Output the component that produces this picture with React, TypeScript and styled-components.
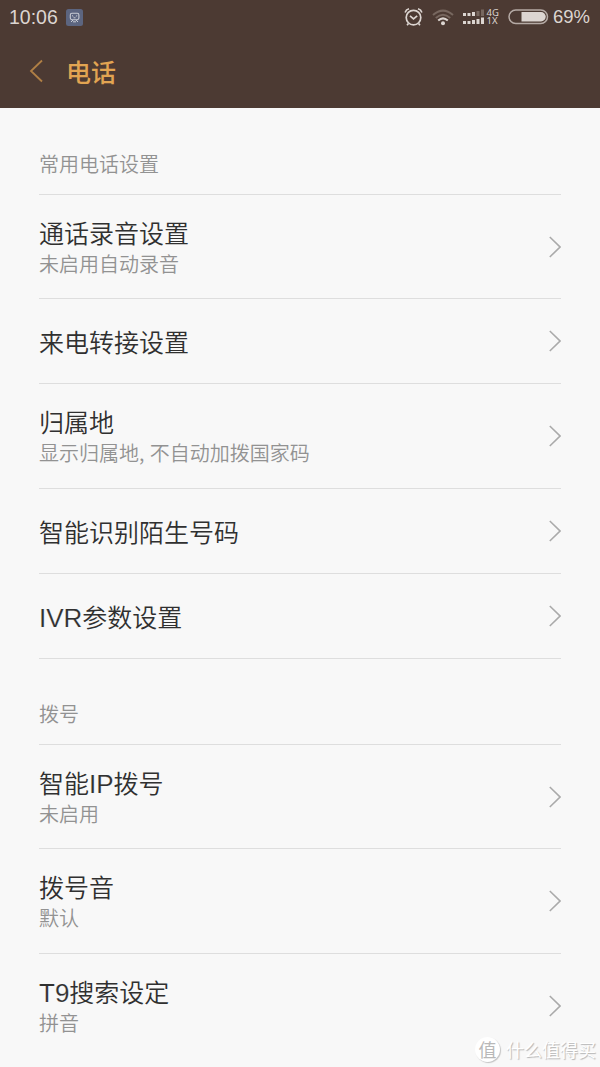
import React from "react";
import styled, { createGlobalStyle } from "styled-components";

const Global = createGlobalStyle`
  body { margin: 0; background: #f8f8f8; }
  * { box-sizing: border-box; }
`;

const Screen = styled.div`
  position: relative;
  width: 600px;
  height: 1067px;
  overflow: hidden;
  background: #f8f8f8;
  font-family: "Liberation Sans", "Noto Sans CJK SC", sans-serif;
`;

const Header = styled.header`
  height: 108px;
  background: #4c3a33;
`;

const StatusBar = styled.div`
  height: 34px;
  padding: 0 10px 0 9px;
  display: flex;
  align-items: center;
  color: #dcd5d1;
`;

const Clock = styled.span`
  width: 57px;
  font-size: 19.5px;
  line-height: 34px;
  white-space: nowrap;
`;

const StatusIcons = styled.div`
  margin-left: auto;
  display: flex;
  align-items: center;
`;

const Battery = styled.span`
  width: 41px;
  font-size: 18.5px;
  line-height: 34px;
  text-align: right;
  white-space: nowrap;
`;

const TitleBar = styled.div`
  height: 74px;
  padding-left: 29px;
  display: flex;
  align-items: center;
`;

const PageTitle = styled.h1`
  margin: -1px 0 0 22px;
  font-family: "Noto Sans CJK SC", sans-serif;
  font-size: 25px;
  line-height: 74px;
  font-weight: 500;
  color: #e2a452;
`;

const List = styled.main`
  padding: 0 39px;
`;

const SectionTitle = styled.h2`
  margin: 0;
  height: 86px;
  padding-top: 41px;
  font-family: "Noto Sans CJK SC", sans-serif;
  font-size: 20px;
  line-height: 30px;
  font-weight: 350;
  color: #929292;
`;

const Row = styled.div<{ $height: number }>`
  height: ${(p) => p.$height}px;
  border-top: 1px solid #dedede;
  display: flex;
  align-items: center;
  justify-content: space-between;
`;

const RowText = styled.div<{ $single: boolean }>`
  padding: ${(p) => (p.$single ? "0 0 1px" : "2px 0 0")};
  font-family: "Noto Sans CJK SC", sans-serif;
  font-weight: 350;
  white-space: nowrap;
`;

const RowTitle = styled.div`
  font-size: 25px;
  line-height: 30px;
  color: #303030;
`;

const Latin = styled.span`
  font-family: "Liberation Sans", sans-serif;
  font-size: 26px;
  line-height: 1;
  font-weight: 400;
  -webkit-text-stroke: 0.15px #f8f8f8;
`;

const RowNote = styled.div`
  margin-top: 2px;
  font-size: 20px;
  line-height: 30px;
  word-spacing: 1px;
  color: #929292;
`;

const Watermark = styled.div`
  position: absolute;
  left: 475px;
  top: 1035px;
  display: flex;
  align-items: center;
  gap: 6px;
  font-family: "Noto Sans CJK SC", sans-serif;
  font-size: 18px;
  line-height: 28px;
  color: #fff;
  text-shadow: 1px 1px 1px #b4b4b4;
  white-space: nowrap;
`;

const Badge = styled.span`
  width: 25px;
  height: 25px;
  border-radius: 50%;
  background: #fff;
  box-shadow: 1px 1px 1px #c4c4c4;
  color: #b8b8b8;
  font-size: 18px;
  line-height: 24px;
  text-align: center;
  text-shadow: none;
`;

const Chevron = () => (
  <svg width="12" height="22" viewBox="0 0 12 22" fill="none" stroke="#aaa" strokeWidth="1.6">
    <path d="M0.8 1L11 11L0.8 21" />
  </svg>
);

const AppIcon = () => (
  <svg width="17" height="17" viewBox="0 0 17 17" fill="none">
    <rect width="17" height="17" rx="2.5" fill="#5c6580" />
    <rect x="4.3" y="4.3" width="8.6" height="6.4" rx="1.6" stroke="#c8cbd3" strokeWidth="1.1" />
    <path d="M6 6.5l1.3.8M11.2 6.5l-1.3.8M7.5 8.8h2M7 11l-2 2M10 11l2 2M7 12.8h3" stroke="#c8cbd3" />
  </svg>
);

const AlarmIcon = () => (
  <svg width="19" height="20" viewBox="0 0 19 20" fill="none" stroke="#dcd5d1" strokeWidth="1.7">
    <circle cx="9.5" cy="10.6" r="7.3" />
    <path d="M6 8.8l3.5 3 3.7-3" />
    <path d="M1.1 5.4Q2 2.5 5 1.7M17.9 5.4Q17 2.5 14 1.7M4.4 16.5l-1.3 1.7M14.6 16.5l1.3 1.7" />
  </svg>
);

const WifiIcon = () => (
  <svg width="22" height="17" viewBox="0 0 22 17" fill="none" strokeWidth="2">
    <path d="M1 6Q11-2.8 21 6" stroke="#77675f" />
    <path d="M3.8 9Q11 2.4 18.2 9" stroke="#77675f" />
    <path d="M6.2 11.6Q11 7.2 15.8 11.6" stroke="#dcd5d1" />
    <circle cx="11" cy="14.2" r="2" fill="#dcd5d1" />
  </svg>
);

const SignalIcon = () => (
  <svg width="37" height="26" viewBox="0 -4 37 26" fill="#dcd5d1">
    <path d="M0 5h3v3H0zM4.5 5h3v3h-3zM9 4h3v4H9zM0 13h3v3H0zM4.5 13h3v3h-3zM9 12h3v4H9zM13.5 11h3v5h-3zM18 9.5h3v6.5h-3z" />
    <path d="M13.5 3h3v5h-3zM18 1.5h3v6.5h-3z" fill="#77675f" />
    <text x="23.5" y="7.5" fontSize="9.5" fontFamily="Noto Sans">4G</text>
    <text x="23.5" y="16" fontSize="9.5" fontFamily="Noto Sans">1X</text>
  </svg>
);

const BatteryIcon = () => (
  <svg width="41" height="16" viewBox="0 0 41 16" fill="none">
    <rect x="1" y="1" width="38.5" height="13.5" rx="6.75" stroke="#b5aaa5" strokeWidth="1.5" />
    <path d="M13.5 3H33a4.75 4.75 0 0 1 0 9.5H13.5z" fill="#dcd5d1" />
  </svg>
);

const BackIcon = () => (
  <svg width="15" height="24" viewBox="0 0 15 24" fill="none" stroke="#b07f45" strokeWidth="1.8">
    <path d="M13 1.5L2 12L13 22.5" />
  </svg>
);

const Cell = styled.span<{ $gap: number }>`
  display: flex;
  margin-right: ${(p) => p.$gap}px;
`;

type Item = { latin?: string; before?: string; text: string; note?: string; height: number };

const common: Item[] = [
  { text: "通话录音设置", note: "未启用自动录音", height: 104 },
  { text: "来电转接设置", height: 85 },
  { text: "归属地", note: "显示归属地, 不自动加拨国家码", height: 105 },
  { text: "智能识别陌生号码", height: 85 },
  { latin: "IVR", text: "参数设置", height: 85 },
];

const dialing: Item[] = [
  { before: "智能", latin: "IP", text: "拨号", note: "未启用", height: 104 },
  { text: "拨号音", note: "默认", height: 105 },
  { latin: "T9", text: "搜索设定", note: "拼音", height: 105 },
];

const Divider = styled.div`
  height: 0;
  margin-bottom: -1px;
  border-top: 1px solid #dedede;
`;

const SettingRow = ({ item }: { item: Item }) => (
  <Row $height={item.height}>
    <RowText $single={!item.note}>
      <RowTitle>
        {item.before}
        {item.latin && <Latin>{item.latin}</Latin>}
        {item.text}
      </RowTitle>
      {item.note && <RowNote>{item.note}</RowNote>}
    </RowText>
    <Chevron />
  </Row>
);

export default function App() {
  return (
    <Screen>
      <Global />
      <Header>
        <StatusBar>
          <Clock>10:06</Clock>
          <AppIcon />
          <StatusIcons>
            <Cell $gap={9}><AlarmIcon /></Cell>
            <Cell $gap={9}><WifiIcon /></Cell>
            <Cell $gap={8}><SignalIcon /></Cell>
            <BatteryIcon />
            <Battery>69%</Battery>
          </StatusIcons>
        </StatusBar>
        <TitleBar>
          <BackIcon />
          <PageTitle>电话</PageTitle>
        </TitleBar>
      </Header>
      <List>
        <SectionTitle>常用电话设置</SectionTitle>
        {common.map((item) => <SettingRow key={item.text} item={item} />)}
        <Divider />
        <SectionTitle>拨号</SectionTitle>
        {dialing.map((item) => <SettingRow key={item.text} item={item} />)}
      </List>
      <Watermark>
        <Badge>值</Badge>
        什么值得买
      </Watermark>
    </Screen>
  );
}
